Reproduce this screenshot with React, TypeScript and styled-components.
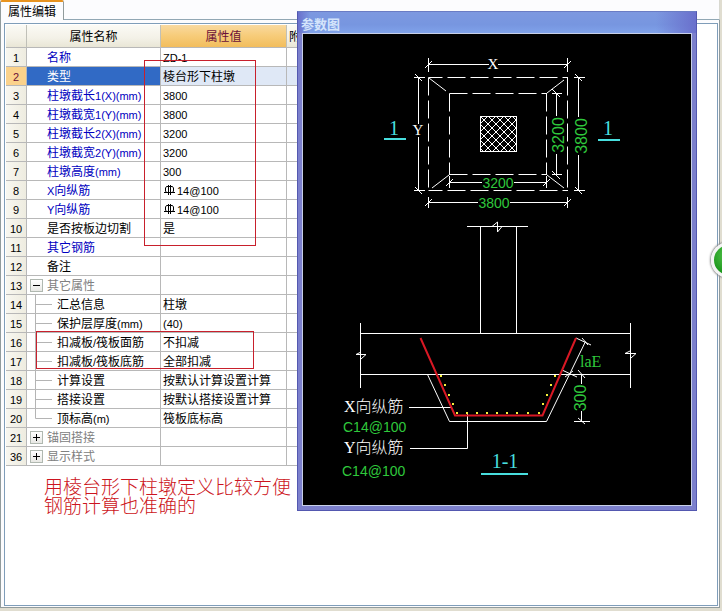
import React from 'react';
import styled, { createGlobalStyle, css } from 'styled-components';

const GlobalStyle = createGlobalStyle`
  * { box-sizing: border-box; }
  html, body { margin: 0; padding: 0; }
  body {
    background: #e0ddd0;
    color: #000;
    font: 12px/18px "Noto Sans CJK SC", sans-serif;
  }
`;

const Page = styled.main`
  position: relative;
  display: flex;
  flex-direction: column;
  min-height: 100vh;
  padding: 0 2px 3px 0;
  overflow: hidden;
`;

const TabBar = styled.div`
  display: flex;
  height: 20px;
  background: #fcfcfe;
  border-bottom: 1px solid #91a7b4;
  border-right: 1px solid #d8d8d0;
`;

const Tab = styled.button`
  height: 20px;
  padding: 0 7px;
  border: 0;
  border-right: 1px solid #919b9c;
  border-left: 1px solid #919b9c;
  border-top: 2px solid #e8931f;
  border-radius: 2px 2px 0 0;
  background: #fcfcfe;
  color: #000;
  font: inherit;
  line-height: 16px;
`;

const TabPanel = styled.section`
  flex: 1;
  display: flex;
  padding: 3px 1px 1px 3px;
  background: #fcfcfe;
  border: 1px solid #919b9c;
  border-top: 0;
`;

const GridFrame = styled.div`
  flex: 1;
  padding: 1px;
  background: #fff;
  border: 1px solid #7f9db9;
`;

const Table = styled.table`
  width: 381px;
  table-layout: fixed;
  border-collapse: separate;
  border-spacing: 0;
`;

const Col = styled.col<{ $w: number }>`
  width: ${(p) => p.$w}px;
`;

const HeadCell = styled.th<{ $active?: boolean; $left?: boolean }>`
  height: 23px;
  padding: 0 2px;
  font-weight: 400;
  text-align: ${(p) => (p.$left ? 'left' : 'center')};
  color: ${(p) => (p.$active ? '#6b1038' : '#000')};
  background: ${(p) =>
    p.$active
      ? 'linear-gradient(#f9d9a0, #f7cd7c 45%, #f2bd5c)'
      : 'linear-gradient(#fbfaf5, #f3f1e7 60%, #e9e6d6)'};
  border-right: 1px solid #c0c0b8;
  border-bottom: 1px solid #b8b8b8;
  overflow: hidden;
`;

const cellBase = css`
  height: 19px;
  padding: 0 2px;
  line-height: 18px;
  white-space: nowrap;
  overflow: hidden;
  border-right: 1px solid #b8b8b8;
  border-bottom: 1px solid #b8b8b8;
`;

const NumCell = styled.th<{ $selected?: boolean }>`
  ${cellBase}
  padding: 0;
  font-weight: 400;
  text-align: center;
  color: ${(p) => (p.$selected ? '#6b1038' : '#000')};
  background: ${(p) => (p.$selected ? '#fbd28b' : 'linear-gradient(90deg, #f8f7f0, #eeece0)')};
`;

type Tone = 'link' | 'plain' | 'group' | 'selected';
const tones: Record<Tone, string> = {
  link: '#0000c0',
  plain: '#000',
  group: '#808080',
  selected: '#fff',
};

const NameCell = styled.td<{ $tone: Tone }>`
  ${cellBase}
  padding: 0;
  color: ${(p) => tones[p.$tone]};
  background: ${(p) => (p.$tone === 'selected' ? '#316ac5' : '#fff')};
`;

const CellLine = styled.div`
  display: flex;
  align-items: center;
  height: 18px;
`;

const Gutter = styled.div<{ $wide?: boolean }>`
  flex: none;
  display: flex;
  align-items: center;
  width: ${(p) => (p.$wide ? 30 : 20)}px;
  height: 18px;
  padding-left: 3px;
`;

const Expander = styled.button`
  width: 13px;
  height: 13px;
  padding: 0;
  border: 1px solid #b0b8b0;
  background: linear-gradient(#fff, #e8e8e4);
  display: grid;
  place-items: center;
`;

const TreeLine = styled.svg`
  width: 22px;
  height: 18px;
  margin-left: 4px;
  overflow: visible;
`;

const ValueCell = styled.td<{ $selected?: boolean }>`
  ${cellBase}
  background: ${(p) => (p.$selected ? '#dfe8f6' : '#fff')};
`;

const RebarIcon = styled.svg`
  flex: none;
  width: 11px;
  height: 12px;
  margin: 0 2px 0 1px;
`;

const Latin = styled.span`
  font-family: "Liberation Sans", sans-serif;
  font-size: 11px;
  line-height: 1;
`;

const Note = styled.p`
  margin: 10px 0 0 38px;
  color: #cc1420;
  font-size: 19px;
  font-weight: 300;
  line-height: 19px;
`;

const Marker = styled.div<{ $x: number; $y: number; $w: number; $h: number }>`
  position: absolute;
  left: ${(p) => p.$x}px;
  top: ${(p) => p.$y}px;
  width: ${(p) => p.$w}px;
  height: ${(p) => p.$h}px;
  border: 1px solid #c8202c;
  pointer-events: none;
`;

const FloatingWindow = styled.section`
  position: absolute;
  left: 297px;
  right: 25px;
  top: 11px;
  padding: 0 4px 4px;
  background: #7c80cc;
  border: 1px solid #5358b0;
  border-top-color: #6a7cc4;
`;

const WindowTitle = styled.h2`
  height: 21px;
  margin: 0 -4px;
  padding: 0 3px;
  background:
    linear-gradient(90deg, #6a70cc, transparent 12px, transparent calc(100% - 40px), #6a70cc),
    linear-gradient(#7d98e0, #7796e0 60%, #80a2ea);
  color: #d4e4fb;
  font-size: 13px;
  font-weight: 700;
  line-height: 23px;
`;

const Canvas = styled.svg`
  display: block;
  width: 100%;
  background: #000;
  border: 1px solid #c8d0e8;
`;

const CadText = styled.text<{ $size: number; $tone: 'white' | 'green' | 'cyan'; $serif?: boolean }>`
  font-family: ${(p) => (p.$serif ? '"Liberation Serif", "Noto Sans CJK SC", serif' : '"Liberation Sans", sans-serif')};
  font-size: ${(p) => p.$size}px;
  font-weight: 300;
  fill: ${(p) => ({ white: '#fff', green: '#2fc83c', cyan: '#48dede' })[p.$tone]};
`;

const SideBall = styled.span`
  position: absolute;
  right: -25px;
  top: 242px;
  width: 36px;
  height: 36px;
  border: 3px solid #f4f4f4;
  border-radius: 50%;
  background: radial-gradient(circle at 50% 35%, #5cc850, #1f9a1f 70%, #158015);
  box-shadow: 0 0 2px 1px #909090;
`;

type Row = {
  n: number;
  name: string;
  value?: string;
  tone?: Tone;
  rebar?: boolean;
  child?: boolean;
  last?: boolean;
  toggle?: '+' | '-';
};

const rows: Row[] = [
  { n: 1, name: '名称', value: 'ZD-1', tone: 'link' },
  { n: 2, name: '类型', value: '棱台形下柱墩', tone: 'selected' },
  { n: 3, name: '柱墩截长1(X)(mm)', value: '3800', tone: 'link' },
  { n: 4, name: '柱墩截宽1(Y)(mm)', value: '3800', tone: 'link' },
  { n: 5, name: '柱墩截长2(X)(mm)', value: '3200', tone: 'link' },
  { n: 6, name: '柱墩截宽2(Y)(mm)', value: '3200', tone: 'link' },
  { n: 7, name: '柱墩高度(mm)', value: '300', tone: 'link' },
  { n: 8, name: 'X向纵筋', value: '14@100', tone: 'link', rebar: true },
  { n: 9, name: 'Y向纵筋', value: '14@100', tone: 'link', rebar: true },
  { n: 10, name: '是否按板边切割', value: '是' },
  { n: 11, name: '其它钢筋', tone: 'link' },
  { n: 12, name: '备注' },
  { n: 13, name: '其它属性', tone: 'group', toggle: '-' },
  { n: 14, name: '汇总信息', value: '柱墩', child: true },
  { n: 15, name: '保护层厚度(mm)', value: '(40)', child: true },
  { n: 16, name: '扣减板/筏板面筋', value: '不扣减', child: true },
  { n: 17, name: '扣减板/筏板底筋', value: '全部扣减', child: true },
  { n: 18, name: '计算设置', value: '按默认计算设置计算', child: true },
  { n: 19, name: '搭接设置', value: '按默认搭接设置计算', child: true },
  { n: 20, name: '顶标高(m)', value: '筏板底标高', child: true, last: true },
  { n: 21, name: '锚固搭接', tone: 'group', toggle: '+' },
  { n: 36, name: '显示样式', tone: 'group', toggle: '+' },
];

function Mixed({ text }: { text: string }) {
  return (
    <span>
      {text.split(/([\x21-\x7e]+)/).map((part, i) =>
        i % 2 ? <Latin key={i}>{part}</Latin> : part,
      )}
    </span>
  );
}

function PropertyRow({ row }: { row: Row }) {
  const selected = row.tone === 'selected';
  return (
    <tr>
      <NumCell scope="row" $selected={selected}>
        <Mixed text={String(row.n)} />
      </NumCell>
      <NameCell $tone={row.tone ?? 'plain'}>
        <CellLine>
          <Gutter $wide={row.child}>
            {row.toggle && (
              <Expander aria-label={row.name} aria-expanded={row.toggle === '-'}>
                <svg width="7" height="7" viewBox="0 0 7 7" stroke="#000">
                  <path d={row.toggle === '-' ? 'M0 3.5H7' : 'M0 3.5H7M3.5 0V7'} />
                </svg>
              </Expander>
            )}
            {row.child && (
              <TreeLine viewBox="0 0 22 18" fill="none" stroke="#b4b4b4">
                <path d={row.last ? 'M1.5 -1V9.5H18' : 'M1.5 -1V18M1.5 9.5H18'} />
              </TreeLine>
            )}
          </Gutter>
          <Mixed text={row.name} />
        </CellLine>
      </NameCell>
      <ValueCell $selected={selected}>
        <CellLine>
          {row.rebar && (
            <RebarIcon viewBox="0 0 11 12" fill="none" stroke="#000">
              <path d="M2.5 2.5H8.5L9.5 4V7L8.5 8.5H2.5L1.5 7V4ZM4.5 1V11M6.5 1V11M0 8.5H11" />
            </RebarIcon>
          )}
          <Mixed text={row.value ?? ''} />
        </CellLine>
      </ValueCell>
      <ValueCell $selected={selected} />
    </tr>
  );
}

const dots: [number, number][] = [
  [440, 375], [444, 384], [448, 394], [452, 403], [456, 412], [466, 412], [476, 412], [486, 412],
  [496, 412], [506, 412], [516, 412], [527, 412], [538, 412], [542, 403], [546, 394], [550, 384], [554, 375],
];

function ParameterDrawing() {
  return (
    <Canvas viewBox="303 34 388 471" role="img">
      <defs>
        <pattern id="hatch" x="480" y="116" width="8" height="8" patternUnits="userSpaceOnUse">
          <path d="M-1 -1L9 9M9 -1L-1 9" stroke="#fff" />
        </pattern>
      </defs>

      <g fill="none" stroke="#fff">
        <g strokeDasharray="18 5">
          <path d="M428.5 77.5H568" strokeDashoffset="4" />
          <path d="M428.5 190.5H568" strokeDashoffset="4" />
          <path d="M428.5 77.5V191M567.5 77.5V191" />
          <path d="M449.5 93.5H547M449.5 174.5H547M449.5 93.5V175M546.5 93.5V175" />
        </g>
        <path d="M429 78L446 91M564 80L547 93M432 188L449 175M547 175L564 188" />
        <rect x="480.5" y="116.5" width="36" height="35" fill="url(#hatch)" />

        <path d="M428.5 64.5H489M498 64.5H567.5M428.5 58V72M567.5 58V72M425 68L432 61M564 68L571 61" />
        <path d="M418.5 77.5V124M418.5 137V190.5M414 77.5H425M414 190.5H425M415 74L422 81M415 187L422 194" />
        <path d="M578.5 77.5V117M578.5 155V190.5M574 77.5H585M574 190.5H585M575 74L582 81M575 187L582 194" />
        <path d="M556.5 93.5V116M556.5 154V174.5M552 93.5H562M552 174.5H562M552 89L560 97M552 171L560 179" />
        <path d="M449.5 182.5H482M514 182.5H546.5M449.5 176V188M546.5 176V188M446 186L453 179M543 186L550 179" />
        <path d="M428.5 202.5H478M510 202.5H567.5M428.5 197V208M567.5 197V208M425 206L432 199M564 206L571 199" />

        <path d="M467 226.5H528M492 226.5L497.5 222V232L502 226.5" />
        <path d="M480.5 226V333M516.5 226V333M360.5 333.5H630.5M360.5 374.5H630.5" />
        <path d="M360.5 323V388M630.5 323V388" />
        <path d="M356 354.5L361 352M356 354.5H366L361 359M625 353.5L630 351M625 353.5H636L631 358" />
        <path d="M427.5 374.5L449.5 421.5H546.5L585.5 341.5" />
        <path d="M576 338L591 345M582 338L588 345M562 370L577 377M565 377L573 371" />
        <path d="M581.5 375V384M581.5 411V421.5M574 421.5H590M578 370L585 378M578 418L585 424M575 374.5H588" />
        <path d="M409 407.5H451M410 448.5H467.5V413" />
      </g>

      <path d="M420.5 338L455 415.5H542.5L576 338" fill="none" stroke="#d81824" strokeWidth="2" />
      {dots.map(([x, y]) => (
        <rect key={`${x}-${y}`} x={x} y={y} width="2" height="2" fill="#f4f03c" />
      ))}
      <path d="M384 139H406M598 140H620M481 474H528" stroke="#48dede" strokeWidth="2" />

      <CadText $size={15} $tone="white" $serif x="493" y="69" textAnchor="middle">X</CadText>
      <CadText $size={15} $tone="white" $serif x="418" y="135" textAnchor="middle">Y</CadText>
      <CadText $size={20} $tone="cyan" $serif x="394" y="135" textAnchor="middle">1</CadText>
      <CadText $size={20} $tone="cyan" $serif x="608" y="135" textAnchor="middle">1</CadText>
      <CadText $size={14} $tone="green" x="498" y="188" textAnchor="middle">3200</CadText>
      <CadText $size={14} $tone="green" x="494" y="208" textAnchor="middle">3800</CadText>
      <CadText $size={16} $tone="green" transform="translate(564 135) rotate(-90)" textAnchor="middle">3200</CadText>
      <CadText $size={16} $tone="green" transform="translate(587 136) rotate(-90)" textAnchor="middle">3800</CadText>
      <CadText $size={16} $tone="green" transform="translate(586 398) rotate(-90)" textAnchor="middle">300</CadText>
      <CadText $size={16} $tone="green" $serif x="580" y="367">laE</CadText>
      <CadText $size={16} $tone="white" $serif x="344" y="412">X向纵筋</CadText>
      <CadText $size={14} $tone="green" x="343" y="432">C14@100</CadText>
      <CadText $size={16} $tone="white" $serif x="344" y="453">Y向纵筋</CadText>
      <CadText $size={14} $tone="green" x="342" y="476">C14@100</CadText>
      <CadText $size={20} $tone="cyan" $serif x="505" y="468" textAnchor="middle">1-1</CadText>
    </Canvas>
  );
}

export default function App() {
  return (
    <>
      <GlobalStyle />
      <Page>
        <TabBar role="tablist">
          <Tab role="tab" aria-selected="true">属性编辑</Tab>
        </TabBar>
        <TabPanel role="tabpanel">
          <GridFrame>
            <Table>
              <colgroup>
                <Col $w={21} />
                <Col $w={134} />
                <Col $w={126} />
                <Col $w={100} />
              </colgroup>
              <thead>
                <tr>
                  <HeadCell />
                  <HeadCell scope="col">属性名称</HeadCell>
                  <HeadCell scope="col" $active>属性值</HeadCell>
                  <HeadCell scope="col" $left>附加</HeadCell>
                </tr>
              </thead>
              <tbody>
                {rows.map((row) => <PropertyRow key={row.n} row={row} />)}
              </tbody>
            </Table>
            <Note>
              用棱台形下柱墩定义比较方便
              <br />
              钢筋计算也准确的
            </Note>
          </GridFrame>
        </TabPanel>
        <Marker $x={144} $y={60} $w={112} $h={186} />
        <Marker $x={36} $y={331} $w={218} $h={38} />
        <FloatingWindow>
          <WindowTitle>参数图</WindowTitle>
          <ParameterDrawing />
        </FloatingWindow>
        <SideBall />
      </Page>
    </>
  );
}
